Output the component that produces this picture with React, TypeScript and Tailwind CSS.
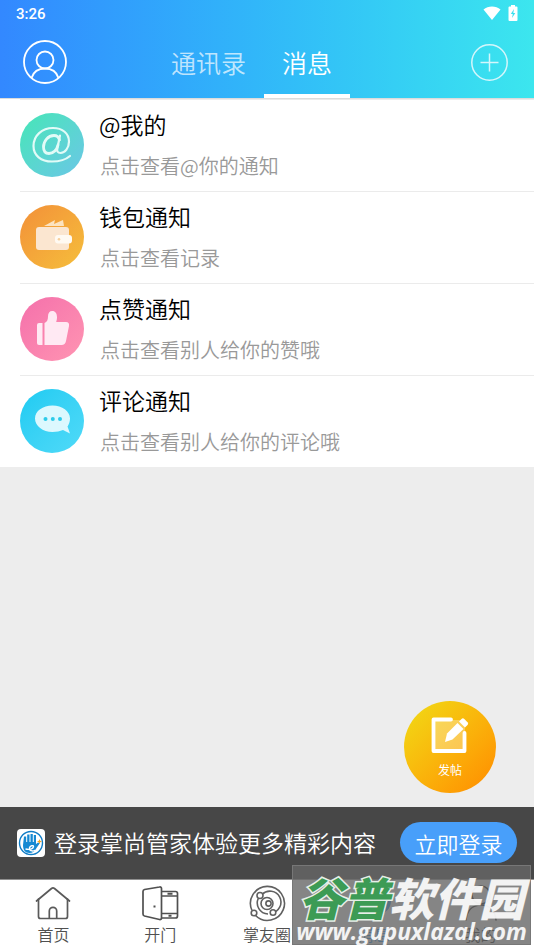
import type { ReactNode } from "react";

type Notice = { title: string; hint: string; circle: string; icon: ReactNode };

const notices: Notice[] = [
  {
    title: "@我的",
    hint: "点击查看@你的通知",
    circle: "from-[#44e6b6] to-[#6ac6e6]",
    icon: (
      <svg viewBox="0 0 64 64" className="size-16" fill="none" stroke="#e2fbf7" strokeLinecap="round" aria-hidden="true">
        <path strokeWidth="2.200" d="M50 43c-4 3.500-10 5.500-18 5.500C21 48.500 13.500 42.500 13.500 33 13.500 22.500 22 15 33 15c9.500 0 16 5.500 16 13.500 0 6.500-4 11.500-8.500 11.500-2.800 0-3.800-1.800-3.200-4.500L40 22.500" />
        <path strokeWidth="2.800" d="M39.500 27c-.8-3-2.700-4.500-5.500-4.500-6 0-10.500 6-10.500 11.500 0 4 2 6.500 5.500 6.500 4.500 0 8-4 9-8.500" />
      </svg>
    ),
  },
  {
    title: "钱包通知",
    hint: "点击查看记录",
    circle: "from-[#f29039] to-[#f5be3b]",
    icon: (
      <svg viewBox="0 0 64 64" className="size-16" aria-hidden="true">
        <path fill="#fce3c0" d="M24 21l11-6-1 4 9-4 1 6z" />
        <rect x="16" y="22" width="33" height="23" rx="3" fill="#fbe6d0" />
        <rect x="35" y="30" width="17" height="8.500" rx="3" fill="#fffaf2" />
        <circle cx="39" cy="34.200" r="1.300" fill="#f7cf9c" />
      </svg>
    ),
  },
  {
    title: "点赞通知",
    hint: "点击查看别人给你的赞哦",
    circle: "from-[#f470ab] to-[#ff94b2]",
    icon: (
      <svg viewBox="0 0 64 64" className="size-16" fill="#ffe9f3" aria-hidden="true">
        <path d="M19 26h3.500v22H19a2 2 0 0 1-2-2V28a2 2 0 0 1 2-2z" />
        <path d="M24.500 26c2.500-1 3.500-3 3.500-6.500 0-3.500 1.500-5.500 4.300-5.500 3 0 4.700 2.500 4.700 6 0 2-.3 3.500-.8 5H46c2.300 0 3.500 1.500 3 4l-3 15c-.5 2.500-2 4-4.500 4h-17z" />
      </svg>
    ),
  },
  {
    title: "评论通知",
    hint: "点击查看别人给你的评论哦",
    circle: "from-[#1ccbf2] to-[#4fdaf8]",
    icon: (
      <svg viewBox="0 0 64 64" className="size-16" aria-hidden="true">
        <path fill="#dcf8fe" d="M32.500 16.500c9.700 0 17.500 5.700 17.500 13 0 3-1 5.700-2.500 8l2.500 7-7-3.500c-3 1.300-6.500 2-10.500 2C22.800 43 15 37 15 29.500s7.800-13 17.500-13z" />
        <g fill="#2ccbea"><circle cx="25.500" cy="30" r="2" /><circle cx="32.800" cy="30" r="2" /><circle cx="40" cy="30" r="2" /></g>
      </svg>
    ),
  },
];

const tabs = [
  {
    label: "首页",
    color: "text-[#505050]",
    icon: (
      <svg viewBox="0 0 38 38" className="size-[38px]" fill="none" stroke="#5a5a5a" strokeWidth="1.700" strokeLinejoin="round" strokeLinecap="round" aria-hidden="true">
        <path d="M4.500 15v17.500a2 2 0 0 0 2 2h25a2 2 0 0 0 2-2V15" />
        <path d="M2.500 17L17.500 4.500a2.500 2.500 0 0 1 3 0L35.500 17" />
        <path d="M15.300 34V27a3.700 3.700 0 0 1 7.400 0v7" />
      </svg>
    ),
  },
  {
    label: "开门",
    color: "text-[#505050]",
    icon: (
      <svg viewBox="0 0 38 38" className="size-[38px]" fill="none" stroke="#505050" strokeWidth="1.700" strokeLinejoin="round" aria-hidden="true">
        <path d="M2 7.500a2 2 0 0 1 1.500-2L18.500 3a1.500 1.500 0 0 1 2 1.500v29.500a1.500 1.500 0 0 1-2 1.500L3.500 32A2 2 0 0 1 2 30z" />
        <path d="M21 7.500h13.500a2 2 0 0 1 2 2v22.500a2 2 0 0 1-2 2H21M21 12h15M21 29.500h15" />
        <path strokeWidth="2" d="M26.500 9.800h5M27.500 31.800h3M12.500 22.500h2" />
      </svg>
    ),
  },
  {
    label: "掌友圈",
    color: "text-[#505050]",
    icon: (
      <svg viewBox="0 0 38 38" className="size-[38px]" fill="none" stroke="#606060" strokeWidth="1.600" aria-hidden="true">
        <path d="M7.500 31.500A17 17 0 1 0 4 26.500" />
        <path d="M14 10.500A11 11 0 1 1 23.500 29M20 30A11 11 0 0 1 10.500 14" />
        <circle cx="19" cy="19.500" r="6" />
        <circle cx="20.500" cy="19.500" r="2.600" />
        <circle cx="12" cy="11.500" r="3" fill="#fff" />
        <circle cx="6" cy="29" r="2.800" fill="#fff" />
        <circle cx="25" cy="28.500" r="2.800" fill="#fff" />
      </svg>
    ),
  },
  {
    label: "消息",
    color: "text-[#2196f3]",
    icon: (
      <svg viewBox="0 0 38 38" className="size-[38px]" aria-hidden="true">
        <path fill="#2196f3" d="M19 2c9.500 0 17 6.500 17 15 0 7-5 12-12 14l-9 5v-5C7.500 29 2 24 2 17 2 8.500 9.500 2 19 2z" />
      </svg>
    ),
  },
  {
    label: "我的",
    color: "text-[#202020]",
    icon: (
      <svg viewBox="0 0 38 38" className="size-[38px]" fill="none" stroke="#202020" strokeWidth="1.600" strokeLinecap="round" aria-hidden="true">
        <circle cx="19" cy="11" r="9" />
        <path d="M4 36c1-10 7-15 15-15s14 5 15 15" />
      </svg>
    ),
  },
];

function StatusBar() {
  return (
    <div className="flex h-7 items-center justify-between px-4">
      <span className="font-[Roboto,sans-serif] text-[15px] font-medium">3:26</span>
      <div className="flex items-center gap-[7px] pb-0.5">
        <svg viewBox="0 0 18 14" className="h-3.5 w-[18px]" fill="#fff" aria-hidden="true">
          <path d="M9 14L.500 3.500C5-.5 13-.5 17.500 3.500z" />
        </svg>
        <svg viewBox="0 0 10 16" className="h-4 w-2.5" aria-hidden="true">
          <path fill="#fff" d="M3 0h4v1.500h1.500a1 1 0 0 1 1 1V15a1 1 0 0 1-1 1h-7a1 1 0 0 1-1-1V2.500a1 1 0 0 1 1-1H3z" />
          <path fill="#3be0ef" d="M6 4L2.800 9h2L4 13l3.300-5h-2z" />
        </svg>
      </div>
    </div>
  );
}

function Header() {
  return (
    <header className="border-b border-[#dcdcdc] bg-linear-to-r from-[#3388ff] to-[#3ce6ee] text-white">
      <StatusBar />
      <div className="flex h-[70px] items-stretch pr-[26px] pl-[23px]">
        <button type="button" aria-label="个人中心" className="self-center pb-0.5">
          <svg viewBox="0 0 44 44" className="size-11" fill="none" stroke="#fff" strokeWidth="1.800" aria-hidden="true">
            <circle cx="22" cy="22" r="21" />
            <circle cx="22" cy="20" r="8.500" />
            <path d="M8.500 38c2-6.500 7-9.500 13.500-9.500S33.500 31.500 35.500 38" />
          </svg>
        </button>
        <nav className="ml-[86px] flex text-[25px] leading-9">
          <button type="button" className="border-b-4 border-transparent px-[18px] pt-0.5 text-white/70">通讯录</button>
          <button type="button" className="border-b-4 border-white px-[18px] pt-0.5">消息</button>
        </nav>
        <button type="button" aria-label="添加" className="ml-auto self-center pb-0.5">
          <svg viewBox="0 0 37 37" className="size-[37px]" fill="none" stroke="#d4f6fb" strokeWidth="1.500" aria-hidden="true">
            <circle cx="18.500" cy="18.500" r="17.700" />
            <path d="M9.500 18.500h18M18.500 9.500v18" />
          </svg>
        </button>
      </div>
    </header>
  );
}

function NoticeRow({ title, hint, circle, icon }: Notice) {
  return (
    <li className="ml-5 h-[92px] border-t border-[#ebebeb]">
      <a href="#" className="flex h-full items-center pb-0.5">
        <span className={`size-16 shrink-0 overflow-hidden rounded-full bg-linear-to-br ${circle}`}>{icon}</span>
        <span className="ml-[15px] flex flex-col gap-2.5">
          <span className="text-[23px] leading-8 text-black">{title}</span>
          <span className="pl-px text-[20px] leading-8 text-[#999]">{hint}</span>
        </span>
      </a>
    </li>
  );
}

function LoginBanner() {
  return (
    <section className="flex h-[73px] items-center border-b border-[#909090] bg-[#474747] px-[17px] pb-px text-white">
      <svg viewBox="0 0 28 28" className="size-7 shrink-0" aria-hidden="true">
        <rect width="28" height="28" rx="4" fill="#fff" />
        <circle cx="14" cy="14" r="11.500" fill="none" stroke="#0f7cc6" strokeWidth="1.400" />
        <path fill="#1689d2" d="M7 7.500h2.200V13h1V5.500h2.300V13h1V5h2.300v8h1V6h2.200v9l2-1.500 2 .5-3.500 5c-1.500 3.500-4 5-7 5-4.500 0-6.500-3-6.500-8z" />
        <path fill="none" stroke="#fff" strokeWidth="1.400" d="M8.500 20c4 1 8 0 8-2.500 0-1.500-3.500-1-4 1.500-.4 2.500 3 4 6 2" />
        <path fill="#f5a623" d="M22.500 10l.7 1.800 1.800.7-1.800.7-.7 1.800-.7-1.800-1.800-.7 1.800-.7z" />
      </svg>
      <p className="ml-[9px] pb-0.5 text-[23px] leading-9 whitespace-nowrap">登录掌尚管家体验更多精彩内容</p>
      <button type="button" className="ml-auto h-[41px] w-[117px] shrink-0 rounded-full bg-[#489ffa] text-[22px] leading-10 whitespace-nowrap">
        立即登录
      </button>
    </section>
  );
}

function Watermark() {
  return (
    <div className="pointer-events-none absolute right-[3px] bottom-[5px] flex h-20 w-[239px] flex-col items-center border border-[#777] bg-[#666]/80 pt-2 font-bold whitespace-nowrap italic text-white/90">
      <span className="text-[45px] leading-[46px] font-black">
        <span className="text-[#3c9b55] [paint-order:stroke_fill] [-webkit-text-stroke:3px_#e6efe8]">谷普</span>软件园
      </span>
      <span className="font-['Open_Sans',sans-serif] text-[23px] leading-[22px]">www.gupuxlazal.com</span>
    </div>
  );
}

export default function App() {
  return (
    <div className="relative flex min-h-screen flex-col bg-[#ededed] font-['Noto_Sans_CJK_SC',sans-serif] font-[350]">
      <Header />
      <main className="flex flex-1 flex-col">
        <ul className="bg-white">
          {notices.map((n) => (
            <NoticeRow key={n.title} {...n} />
          ))}
        </ul>
        <button
          type="button"
          className="mt-auto mr-[38px] mb-3.5 flex size-[92px] flex-col items-center self-end rounded-full bg-linear-to-br from-[#efdc16] to-[#ff8a00] pt-3.5 text-white"
        >
          <svg viewBox="0 0 40 40" className="size-10" aria-hidden="true">
            <path fill="#fff" fillOpacity=".3" d="M4 5h31v31H4z" />
            <path fill="none" stroke="#fff" strokeWidth="3.800" strokeLinecap="round" strokeLinejoin="round" d="M21 4.500H3.500v31.500h31V18" />
            <g fill="#fff">
              <path d="M17 18.500L27.500 8l6 6L22.500 24.500 15 27z" />
              <path d="M29 6.500l2.500-2.500a2 2 0 0 1 2.800 0l3.200 3.200a2 2 0 0 1 0 2.800L35 12.500z" />
            </g>
          </svg>
          <span className="mt-1.5 text-[12px] leading-[18px] font-normal">发帖</span>
        </button>
      </main>
      <LoginBanner />
      <nav className="flex h-[70px] bg-white">
        {tabs.map((t) => (
          <a key={t.label} href="#" className={`flex flex-1 flex-col items-center pt-1 ${t.color}`}>
            {t.icon}
            <span className="text-[16px] leading-6">{t.label}</span>
          </a>
        ))}
      </nav>
      <Watermark />
    </div>
  );
}
